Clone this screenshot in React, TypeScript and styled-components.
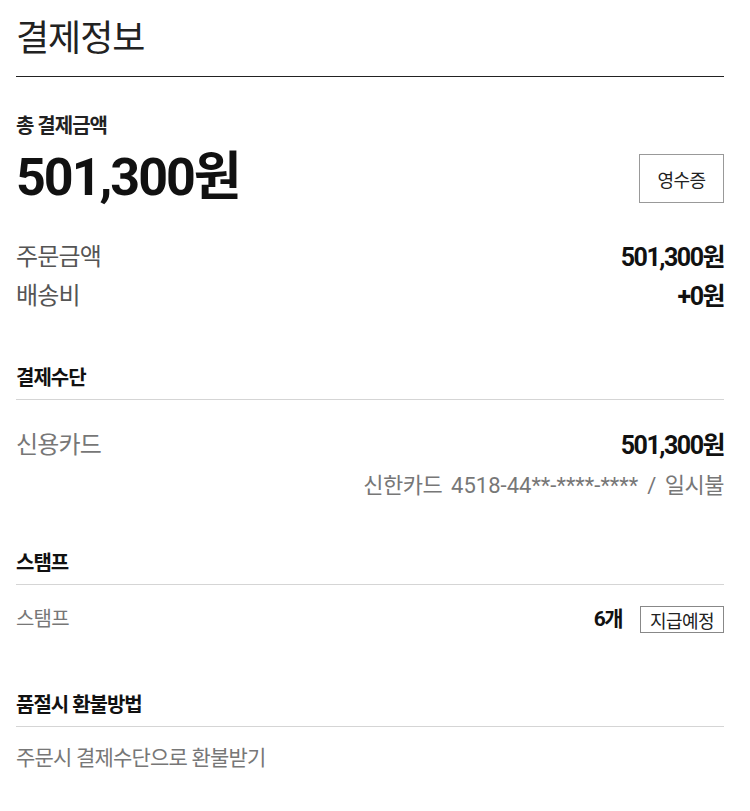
import styled, { createGlobalStyle } from "styled-components";

const GlobalStyle = createGlobalStyle`
  body {
    margin: 0;
    background: #fff;
    font-family: Roboto, "Noto Sans CJK KR", sans-serif;
    color: #222;
  }
`

const Page = styled.div`
  width: 708px;
  padding: 0 26px 40px 16px;
`

const Title = styled.h1`
  margin: 0;
  padding: 16px 0 14px;
  font-size: 36px;
  font-weight: 400;
  line-height: 46px;
  letter-spacing: -1px;
  color: #222;
  border-bottom: 1px solid #222;
`

const TotalBlock = styled.div`
  padding-top: 36px;
  display: flex;
  align-items: flex-end;
  justify-content: space-between;
`

const TotalLabel = styled.div`
  font-size: 20px;
  font-weight: 700;
  line-height: 26px;
  letter-spacing: -1px;
`

const TotalPrice = styled.div`
  margin-top: 9px;
  font-size: 52px;
  font-weight: 700;
  line-height: 60px;
  letter-spacing: -2px;
  color: #111;
`

const BoxButton = styled.button<{ size: "md" | "sm" }>`
  background: #fff;
  border: 1px solid ${props => props.size === "md" ? "#999" : "#888"};
  font-family: inherit;
  color: #222;
  font-size: 18px;
  letter-spacing: -0.5px;
  padding: 0;
  width: ${props => props.size === "md" ? "85px" : "84px"};
  height: ${props => props.size === "md" ? "49px" : "27px"};
  margin-bottom: ${props => props.size === "md" ? "5px" : "0"};
  cursor: pointer;
`

const Rows = styled.div<{ top: number; gap?: number }>`
  padding-top: ${props => props.top}px;
  display: flex;
  flex-direction: column;
  gap: ${props => props.gap || 0}px;
`

const Row = styled.div`
  display: flex;
  align-items: center;
  justify-content: space-between;
`

const Label = styled.span<{ size: number; color: string }>`
  font-size: ${props => props.size}px;
  line-height: 31px;
  letter-spacing: -0.8px;
  color: ${props => props.color};
`

const Value = styled.span<{ size: number }>`
  font-size: ${props => props.size}px;
  font-weight: 700;
  line-height: 31px;
  letter-spacing: -1.5px;
  color: #111;
`

const Section = styled.section<{ top: number }>`
  padding-top: ${props => props.top}px;
`

const SectionHead = styled.h2`
  margin: 0;
  padding-bottom: 8px;
  font-size: 20px;
  font-weight: 700;
  line-height: 26px;
  letter-spacing: -1px;
  color: #111;
  border-bottom: 1px solid #d5d5d5;
`

const Detail = styled.div`
  text-align: right;
  margin-top: 11px;
  font-size: 22px;
  line-height: 28px;
  letter-spacing: -0.5px;
  color: #777;
  word-spacing: 4px;
`

const CardNumber = styled.span`
  letter-spacing: 0;
  word-spacing: 0;
`

const StampRight = styled.div`
  display: flex;
  align-items: center;
  gap: 18px;
`

const App = () => {
    return <Page>
        <GlobalStyle/>
        <Title>결제정보</Title>
        <TotalBlock>
            <div>
                <TotalLabel>총 결제금액</TotalLabel>
                <TotalPrice>501,300원</TotalPrice>
            </div>
            <BoxButton size="md">영수증</BoxButton>
        </TotalBlock>
        <Rows top={34} gap={8}>
            <Row>
                <Label size={24} color={"#555"}>주문금액</Label>
                <Value size={25}>501,300원</Value>
            </Row>
            <Row>
                <Label size={24} color={"#555"}>배송비</Label>
                <Value size={25}>+0원</Value>
            </Row>
        </Rows>
        <Section top={53}>
            <SectionHead>결제수단</SectionHead>
            <Rows top={30}>
                <Row>
                    <Label size={24} color={"#777"}>신용카드</Label>
                    <Value size={25}>501,300원</Value>
                </Row>
            </Rows>
            <Detail>
                신한카드 <CardNumber>4518-44**-****-****</CardNumber> / 일시불
            </Detail>
        </Section>
        <Section top={50}>
            <SectionHead>스탬프</SectionHead>
            <Rows top={19}>
                <Row>
                    <Label size={20} color={"#777"}>스탬프</Label>
                    <StampRight>
                        <Value size={21}>6개</Value>
                        <BoxButton size="sm">지급예정</BoxButton>
                    </StampRight>
                </Row>
            </Rows>
        </Section>
        <Section top={57}>
            <SectionHead>품절시 환불방법</SectionHead>
            <Rows top={16}>
                <Label size={21} color={"#777"}>주문시 결제수단으로 환불받기</Label>
            </Rows>
        </Section>
    </Page>
}

export default App;
